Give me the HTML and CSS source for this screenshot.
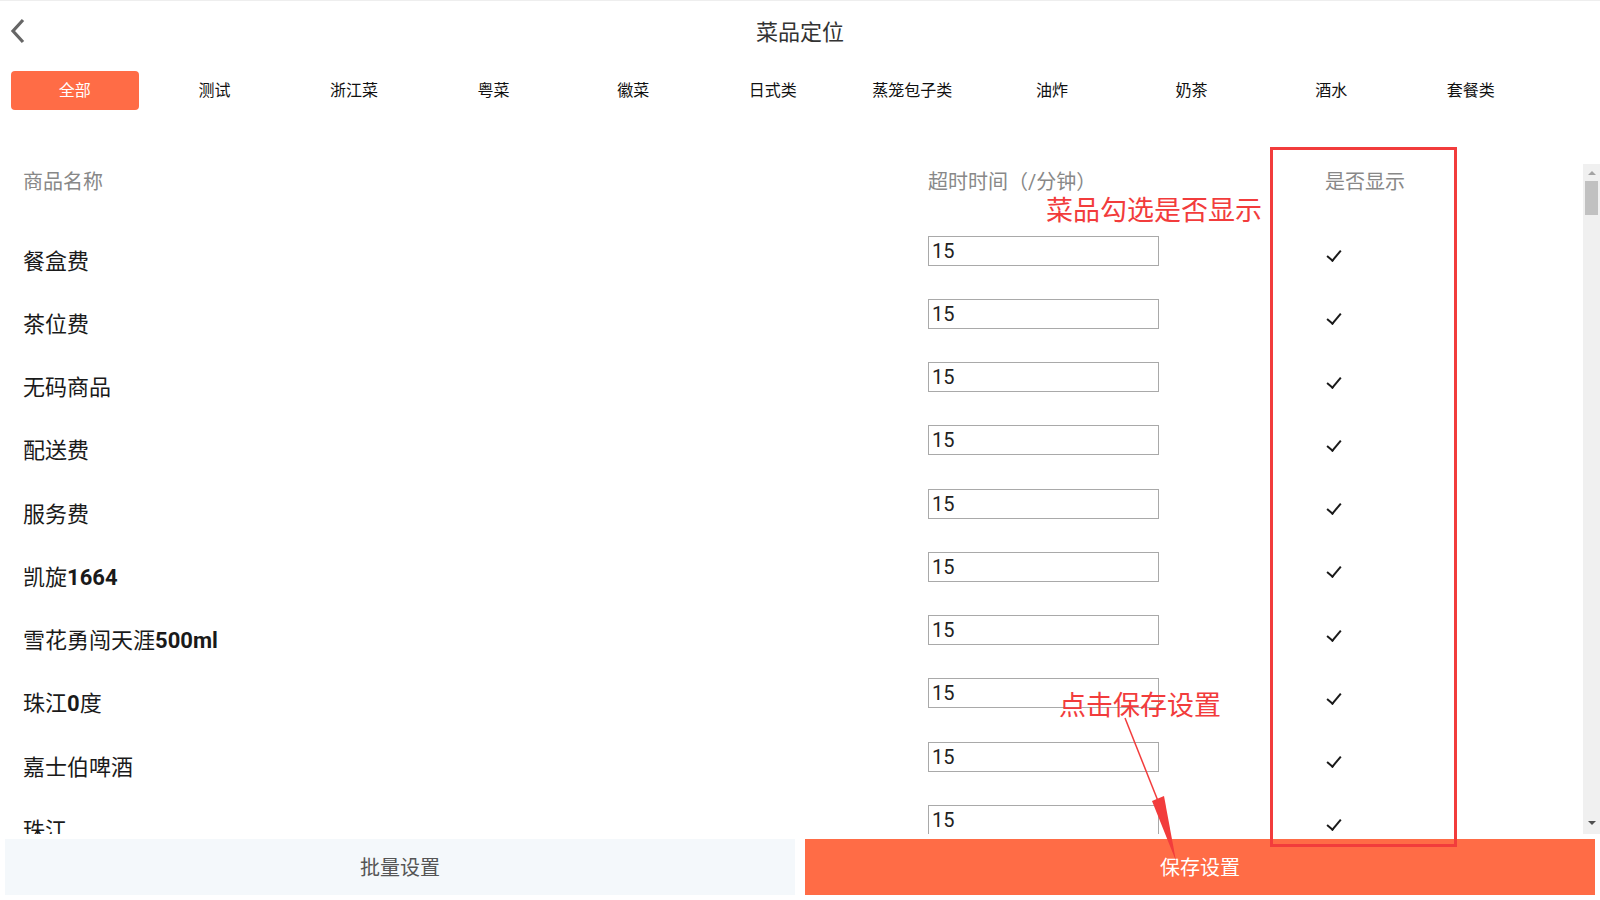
FILE: index.html
```html
<!DOCTYPE html>
<html lang="zh-CN">
<head>
    <meta charset="UTF-8">
    <title>菜品定位</title>
    <link rel="stylesheet" href="styles.css">
</head>
<body>
<div class="page">
    <!-- Top bar -->
    <div class="topbar">
        <span class="back">
            <svg width="16" height="26" viewBox="0 0 16 26"><polyline points="13,2 3,13 13,24" fill="none" stroke="#666" stroke-width="3.2"/></svg>
        </span>
        <div class="title">菜品定位</div>
    </div>

    <!-- Category tabs -->
    <div class="tabs">
        <div class="tab active"><span>全部</span></div>
        <div class="tab"><span>测试</span></div>
        <div class="tab"><span>浙江菜</span></div>
        <div class="tab"><span>粤菜</span></div>
        <div class="tab"><span>徽菜</span></div>
        <div class="tab"><span>日式类</span></div>
        <div class="tab"><span>蒸笼包子类</span></div>
        <div class="tab"><span>油炸</span></div>
        <div class="tab"><span>奶茶</span></div>
        <div class="tab"><span>酒水</span></div>
        <div class="tab"><span>套餐类</span></div>
    </div>

    <!-- Goods list -->
    <div class="list-wrap">
        <div class="list">
            <div class="list-head">
                <div class="col-name">商品名称</div>
                <div class="col-time">超时时间（/分钟）</div>
                <div class="col-show">是否显示</div>
            </div>
            <div class="row"><div class="col-name">餐盒费</div><div class="col-time"><input value="15"></div><div class="col-show"><span class="check"></span></div></div>
            <div class="row"><div class="col-name">茶位费</div><div class="col-time"><input value="15"></div><div class="col-show"><span class="check"></span></div></div>
            <div class="row"><div class="col-name">无码商品</div><div class="col-time"><input value="15"></div><div class="col-show"><span class="check"></span></div></div>
            <div class="row"><div class="col-name">配送费</div><div class="col-time"><input value="15"></div><div class="col-show"><span class="check"></span></div></div>
            <div class="row"><div class="col-name">服务费</div><div class="col-time"><input value="15"></div><div class="col-show"><span class="check"></span></div></div>
            <div class="row"><div class="col-name">凯旋<b>1664</b></div><div class="col-time"><input value="15"></div><div class="col-show"><span class="check"></span></div></div>
            <div class="row"><div class="col-name">雪花勇闯天涯<b>500ml</b></div><div class="col-time"><input value="15"></div><div class="col-show"><span class="check"></span></div></div>
            <div class="row"><div class="col-name">珠江<b>0</b>度</div><div class="col-time"><input value="15"></div><div class="col-show"><span class="check"></span></div></div>
            <div class="row"><div class="col-name">嘉士伯啤酒</div><div class="col-time"><input value="15"></div><div class="col-show"><span class="check"></span></div></div>
            <div class="row"><div class="col-name">珠江</div><div class="col-time"><input value="15"></div><div class="col-show"><span class="check"></span></div></div>
        </div>
        <div class="scrollbar">
            <span class="arrow-up"></span>
            <span class="thumb"></span>
            <span class="arrow-down"></span>
        </div>
    </div>

    <!-- Bottom buttons -->
    <div class="actions">
        <div class="btn-batch">批量设置</div>
        <div class="btn-save">保存设置</div>
    </div>

    <!-- Red annotations over the screenshot -->
    <div class="mark-box"></div>
    <div class="mark-text mark-show">菜品勾选是否显示</div>
    <div class="mark-text mark-save">点击保存设置</div>
    <svg class="mark-arrow" width="70" height="160" viewBox="1120 710 70 160">
        <line x1="1125" y1="717" x2="1158" y2="800" stroke="#F23C3C" stroke-width="1.5"/>
        <polygon points="1152,800 1164,795 1176,860" fill="#F23C3C"/>
    </svg>
</div>
</body>
</html>
```

FILE: styles.css
```css
* { margin: 0; padding: 0; box-sizing: border-box; }
body { background: #fff; font-family: Roboto, "Noto Sans CJK SC", sans-serif; color: #222; }

.page { position: relative; width: 1600px; height: 900px; display: flex; flex-direction: column; border-top: 1px solid #eee; overflow: hidden; }

/* Top bar */
.topbar { height: 59px; display: flex; align-items: center; justify-content: center; position: relative; }
.back { position: absolute; left: 10px; top: 17px; display: flex; }
.title { font-size: 22px; color: #333; margin-bottom: 2px; }

/* Tabs */
.tabs { display: flex; padding: 0 5px; margin-top: 11px; height: 39px; }
.tab { flex: 0 0 139.6px; padding: 0 6px; display: flex; }
.tab span { flex: 1; display: flex; align-items: center; justify-content: center; font-size: 16px; color: #111; border-radius: 4px; padding-bottom: 4px; }
.tab.active span { background: #FF6C46; color: #fff; }

/* List */
.list-wrap { display: flex; height: 670px; margin: 54px 0 0 5px; }
.list { flex: 1; overflow: hidden; padding-left: 18px; }
.list-head { display: flex; height: 34px; align-items: center; font-size: 20px; color: #888; margin-bottom: 26px; padding-bottom: 2px; }
.col-name { width: 905px; }
.col-time { width: 342px; }
.col-show { width: 190px; }
.list-head .col-show { text-align: center; }

.row { display: flex; height: 63.25px; align-items: center; }
.row .col-name { font-size: 22px; color: #1a1a1a; padding-top: 6px; }
.row .col-name b { font-weight: 700; }
.row .col-time { margin-bottom: 10px; }
.row input { width: 231px; height: 30px; border: 1px solid #a9a9a9; font-family: Roboto, sans-serif; font-size: 20px; color: #222; padding: 0 3px; outline: none; }
.row .col-show { padding-left: 55px; display: flex; }
.check { width: 17px; height: 13px; position: relative; }
.check::after { content: ""; position: absolute; left: 5px; top: -2px; width: 6px; height: 12px; border-right: 2px solid #1a1a1a; border-bottom: 2px solid #1a1a1a; transform: rotate(40deg); }

/* Scrollbar */
.scrollbar { width: 17px; background: #f0f0f0; display: flex; flex-direction: column; align-items: center; }
.arrow-up { margin-top: 7px; border-left: 4px solid transparent; border-right: 4px solid transparent; border-bottom: 4px solid #a3a3a3; }
.thumb { width: 13px; height: 34px; background: #c1c1c1; margin-top: 6px; }
.arrow-down { margin-top: auto; margin-bottom: 9px; border-left: 4px solid transparent; border-right: 4px solid transparent; border-top: 4px solid #505050; }

/* Bottom buttons */
.actions { display: flex; gap: 10px; padding: 0 5px; margin-top: 5px; height: 56px; }
.actions div { flex: 1; display: flex; align-items: center; justify-content: center; font-size: 20px; padding-bottom: 2px; }
.btn-batch { background: #F4F8FB; color: #555; }
.btn-save { background: #FF6C46; color: #fff; }

/* Annotations */
.mark-box { position: absolute; left: 1270px; top: 146px; width: 187px; height: 700px; border: 3px solid #F23C3C; }
.mark-text { position: absolute; font-family: "Noto Sans CJK SC", sans-serif; font-size: 27px; color: #F23C3C; line-height: 1; }
.mark-show { left: 1046px; top: 194px; }
.mark-save { left: 1059px; top: 689px; }
.mark-arrow { position: absolute; left: 1120px; top: 710px; }
```
